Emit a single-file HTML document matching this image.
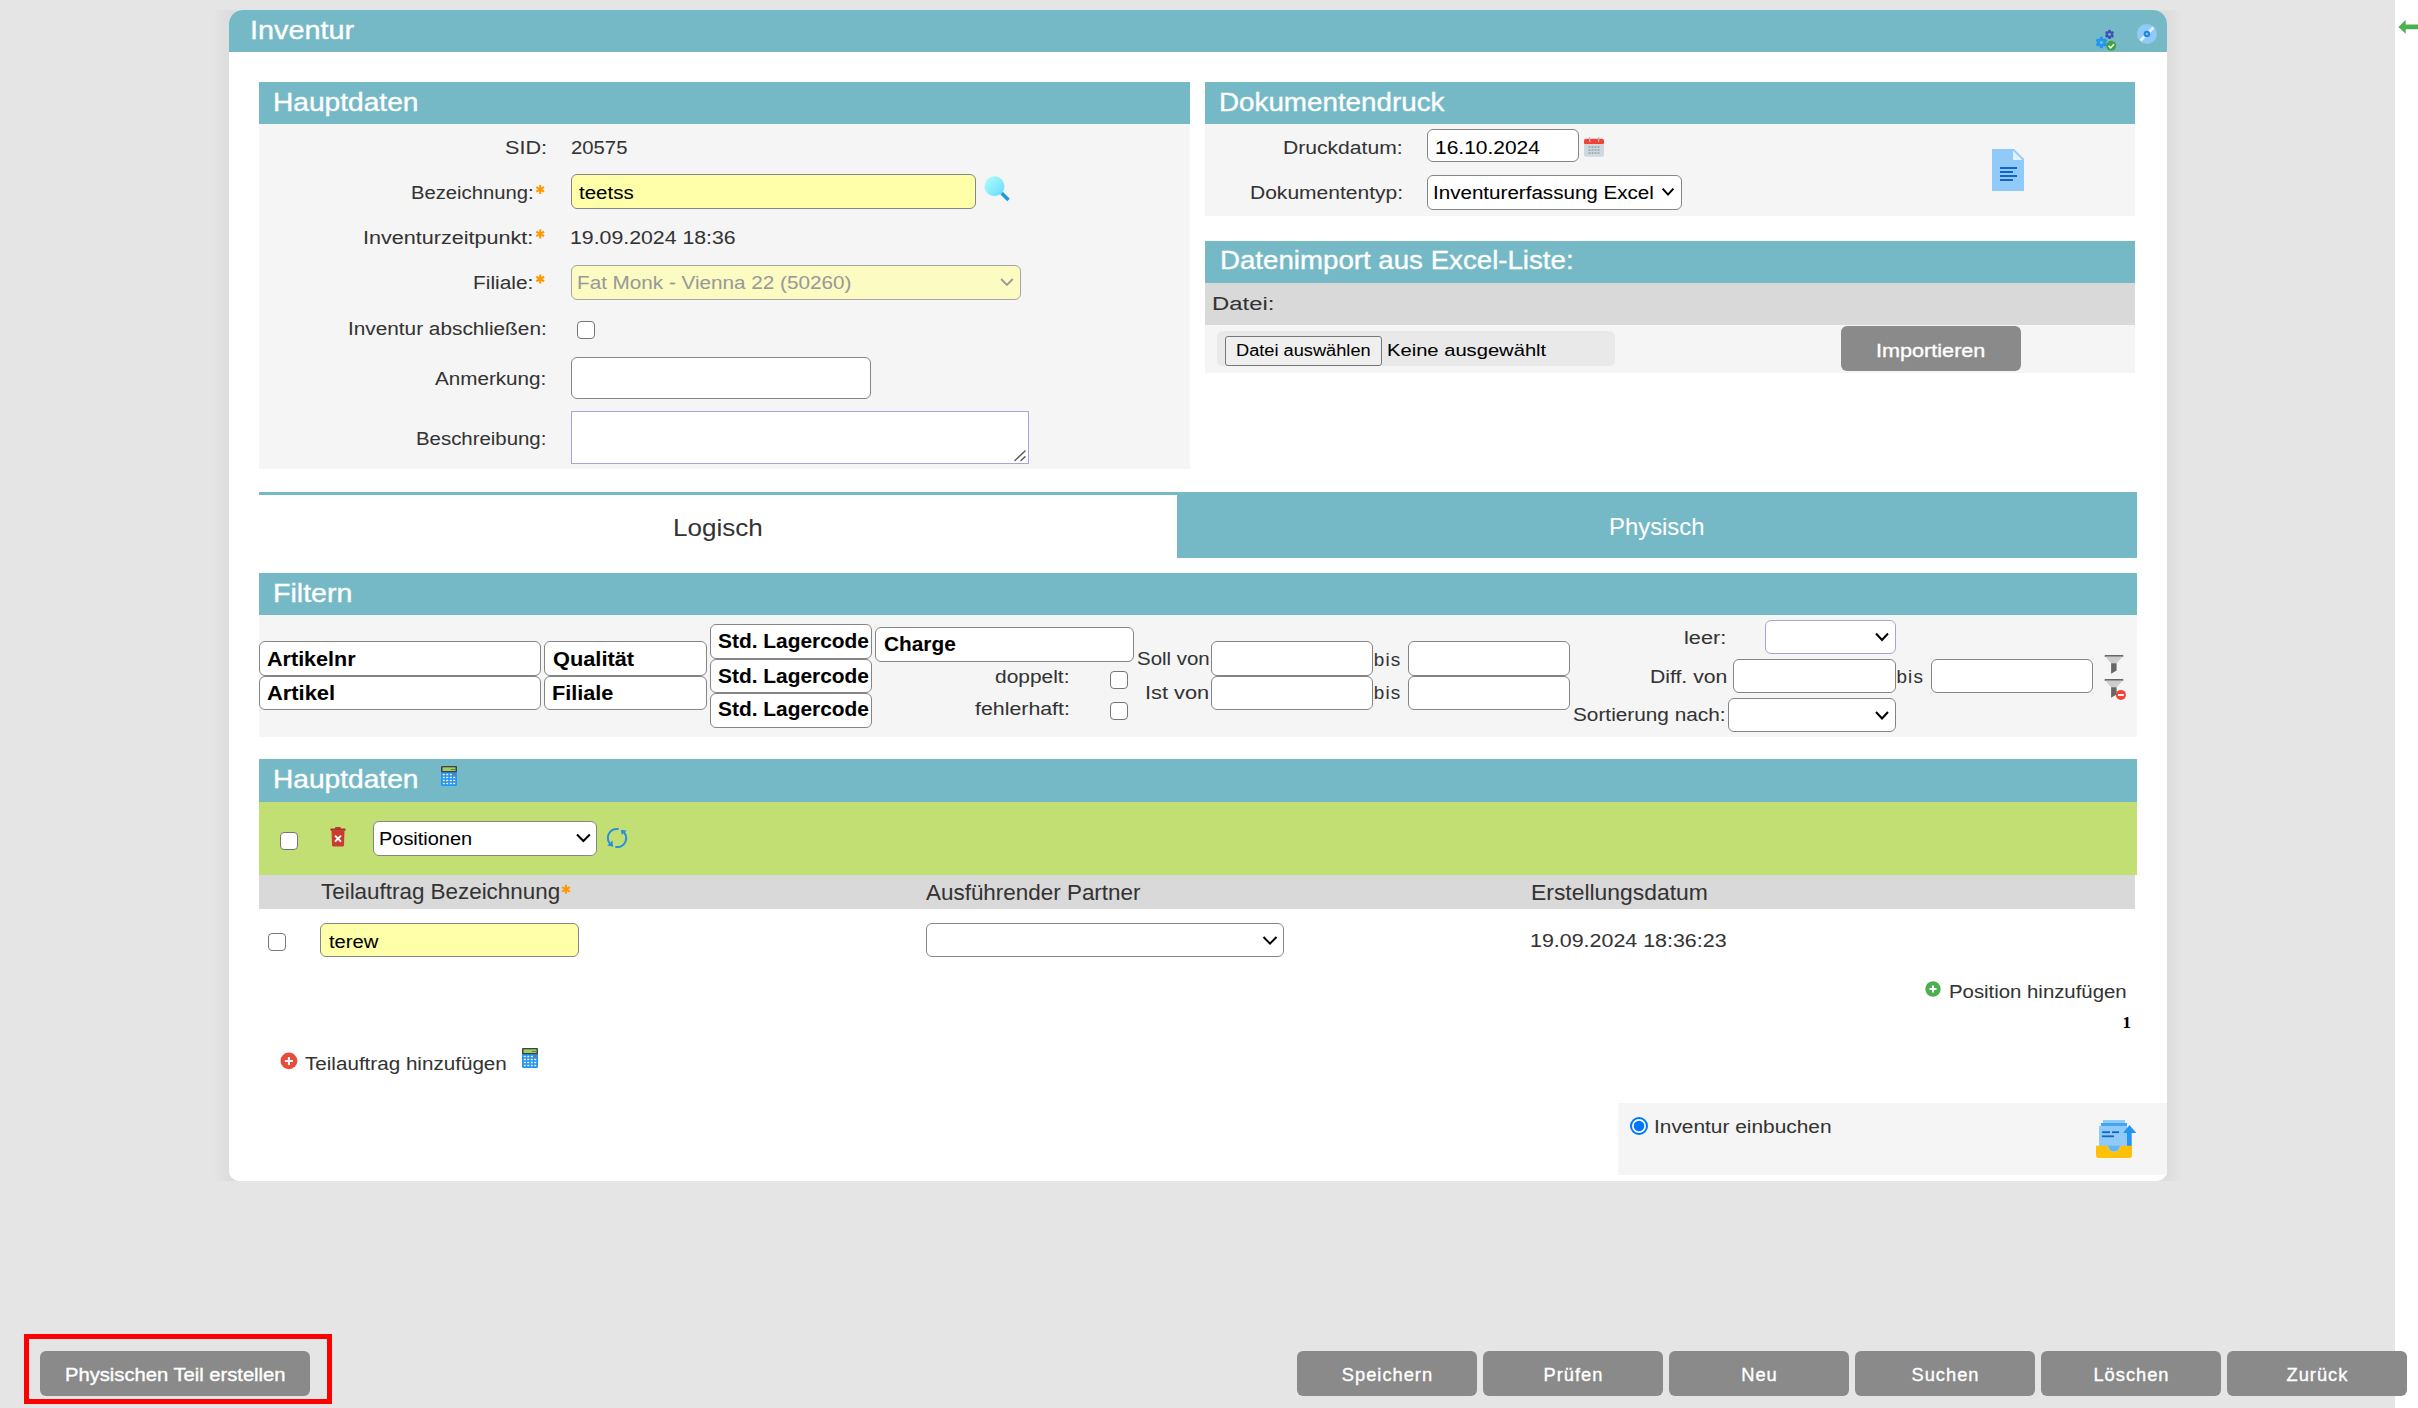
<!DOCTYPE html>
<html><head><meta charset="utf-8"><style>
html,body{margin:0;padding:0;}
body{width:2418px;height:1408px;background:#e5e5e5;position:relative;overflow:hidden;font-family:"Liberation Sans",sans-serif;}
.a{position:absolute;}
.t{position:absolute;white-space:pre;}
svg.i{position:absolute;overflow:visible;}
</style></head><body>
<div class="a" style="left:2395px;top:0px;width:23px;height:1408px;background:#ffffff;"></div>
<div class="a" style="left:213px;top:10px;width:32px;height:1171px;background:linear-gradient(to right, rgba(0,0,0,0) 0px, rgba(0,0,0,0.035) 16px);"></div>
<div class="a" style="left:2151px;top:10px;width:32px;height:1171px;background:linear-gradient(to right, rgba(0,0,0,0.035) 16px, rgba(0,0,0,0) 32px);"></div>
<div class="a" style="left:229px;top:10px;width:1938px;height:1171px;background:#ffffff;border-radius:14px 14px 10px 10px;"></div>
<div class="a" style="left:229px;top:10px;width:1938px;height:42px;background:#76b9c6;border-radius:14px 14px 0 0;"></div>
<div class="t" style="left:249.84px;top:15px;font-size:26.5px;line-height:30px;letter-spacing:0.000px;color:#ffffff;font-weight:400;font-family:'Liberation Sans', sans-serif;-webkit-text-stroke:0.35px #ffffff;transform:scaleX(1.0865);transform-origin:0 0;">Inventur</div>
<div class="a" style="left:259px;top:82px;width:931px;height:42px;background:#76b9c6;"></div>
<div class="a" style="left:259px;top:124px;width:931px;height:345px;background:#f5f5f5;"></div>
<div class="t" style="left:273.29px;top:87px;font-size:26.2px;line-height:30px;letter-spacing:0.000px;color:#ffffff;font-weight:400;font-family:'Liberation Sans', sans-serif;-webkit-text-stroke:0.35px #ffffff;transform:scaleX(1.0742);transform-origin:0 0;">Hauptdaten</div>
<div class="t" style="left:504.62px;top:137px;font-size:18.9px;line-height:21px;letter-spacing:0.000px;color:#333;font-weight:400;font-family:'Liberation Sans', sans-serif;-webkit-text-stroke:0.05px #333;transform:scaleX(1.1442);transform-origin:0 0;">SID:</div>
<div class="t" style="left:570.98px;top:137px;font-size:18.9px;line-height:21px;letter-spacing:0.000px;color:#333;font-weight:400;font-family:'Liberation Sans', sans-serif;-webkit-text-stroke:0.05px #333;transform:scaleX(1.0745);transform-origin:0 0;">20575</div>
<div class="t" style="left:410.94px;top:182px;font-size:18.9px;line-height:21px;letter-spacing:0.000px;color:#333;font-weight:400;font-family:'Liberation Sans', sans-serif;-webkit-text-stroke:0.05px #333;transform:scaleX(1.0704);transform-origin:0 0;">Bezeichnung:</div>
<svg class="i" style="left:0;top:0" width="2418" height="1408"><path d="M540.20,184.90 L540.20,193.90 M536.30,187.15 L544.10,191.65 M544.10,187.15 L536.30,191.65 " stroke="#ff9800" stroke-width="2.1"/></svg>
<div class="a" style="left:571px;top:174px;width:405px;height:35px;background:#ffffaa;border:1px solid #858585;box-sizing:border-box;border-radius:6px;"></div>
<div class="t" style="left:579.09px;top:182px;font-size:18.9px;line-height:21px;letter-spacing:0.000px;color:#000;font-weight:400;font-family:'Liberation Sans', sans-serif;-webkit-text-stroke:0.05px #000;transform:scaleX(1.0838);transform-origin:0 0;">teetss</div>
<div class="t" style="left:363.41px;top:226.5px;font-size:18.9px;line-height:21px;letter-spacing:0.000px;color:#333;font-weight:400;font-family:'Liberation Sans', sans-serif;-webkit-text-stroke:0.05px #333;transform:scaleX(1.1412);transform-origin:0 0;">Inventurzeitpunkt:</div>
<svg class="i" style="left:0;top:0" width="2418" height="1408"><path d="M540.20,229.40 L540.20,238.40 M536.30,231.65 L544.10,236.15 M544.10,231.65 L536.30,236.15 " stroke="#ff9800" stroke-width="2.1"/></svg>
<div class="t" style="left:570.38px;top:226.5px;font-size:18.9px;line-height:21px;letter-spacing:0.000px;color:#333;font-weight:400;font-family:'Liberation Sans', sans-serif;-webkit-text-stroke:0.05px #333;transform:scaleX(1.1265);transform-origin:0 0;">19.09.2024 18:36</div>
<div class="t" style="left:473.49px;top:271.6px;font-size:18.9px;line-height:21px;letter-spacing:0.000px;color:#333;font-weight:400;font-family:'Liberation Sans', sans-serif;-webkit-text-stroke:0.05px #333;transform:scaleX(1.1044);transform-origin:0 0;">Filiale:</div>
<svg class="i" style="left:0;top:0" width="2418" height="1408"><path d="M540.20,274.50 L540.20,283.50 M536.30,276.75 L544.10,281.25 M544.10,276.75 L536.30,281.25 " stroke="#ff9800" stroke-width="2.1"/></svg>
<div class="a" style="left:571px;top:265px;width:450px;height:35px;background:#fcfbc1;border:1px solid #a5a5a5;box-sizing:border-box;border-radius:6px;"></div>
<div class="t" style="left:576.70px;top:271.6px;font-size:18.9px;line-height:21px;letter-spacing:0.000px;color:#999;font-weight:400;font-family:'Liberation Sans', sans-serif;-webkit-text-stroke:0.05px #999;transform:scaleX(1.0946);transform-origin:0 0;">Fat Monk - Vienna 22 (50260)</div>
<div class="t" style="left:347.78px;top:318px;font-size:18.9px;line-height:21px;letter-spacing:0.000px;color:#333;font-weight:400;font-family:'Liberation Sans', sans-serif;-webkit-text-stroke:0.05px #333;transform:scaleX(1.1002);transform-origin:0 0;">Inventur abschließen:</div>
<div class="a" style="left:577px;top:321px;width:18px;height:18px;background:#fff;border:1.8px solid #767676;box-sizing:border-box;border-radius:4px;"></div>
<div class="t" style="left:435.26px;top:367.7px;font-size:18.9px;line-height:21px;letter-spacing:0.000px;color:#333;font-weight:400;font-family:'Liberation Sans', sans-serif;-webkit-text-stroke:0.05px #333;transform:scaleX(1.0924);transform-origin:0 0;">Anmerkung:</div>
<div class="a" style="left:571px;top:357px;width:300px;height:42px;background:#fff;border:1px solid #858585;box-sizing:border-box;border-radius:6px;"></div>
<div class="t" style="left:416.13px;top:427.8px;font-size:18.9px;line-height:21px;letter-spacing:0.000px;color:#333;font-weight:400;font-family:'Liberation Sans', sans-serif;-webkit-text-stroke:0.05px #333;transform:scaleX(1.0795);transform-origin:0 0;">Beschreibung:</div>
<div class="a" style="left:571px;top:411px;width:458px;height:53px;background:#fff;border:1px solid #a6a6d6;box-sizing:border-box;"></div>
<div class="a" style="left:1205px;top:82px;width:930px;height:42px;background:#76b9c6;"></div>
<div class="a" style="left:1205px;top:124px;width:930px;height:92px;background:#f5f5f5;"></div>
<div class="t" style="left:1219.02px;top:87px;font-size:26.2px;line-height:30px;letter-spacing:0.000px;color:#fff;font-weight:400;font-family:'Liberation Sans', sans-serif;-webkit-text-stroke:0.35px #fff;transform:scaleX(1.0607);transform-origin:0 0;">Dokumentendruck</div>
<div class="t" style="left:1283.27px;top:136.7px;font-size:18.9px;line-height:21px;letter-spacing:0.000px;color:#333;font-weight:400;font-family:'Liberation Sans', sans-serif;-webkit-text-stroke:0.05px #333;transform:scaleX(1.1169);transform-origin:0 0;">Druckdatum:</div>
<div class="a" style="left:1427px;top:129px;width:152px;height:33px;background:#fff;border:1px solid #858585;box-sizing:border-box;border-radius:6px;"></div>
<div class="t" style="left:1435.20px;top:136.5px;font-size:18.9px;line-height:21px;letter-spacing:0.000px;color:#000;font-weight:400;font-family:'Liberation Sans', sans-serif;-webkit-text-stroke:0.05px #000;transform:scaleX(1.1091);transform-origin:0 0;">16.10.2024</div>
<div class="t" style="left:1249.77px;top:182px;font-size:18.9px;line-height:21px;letter-spacing:0.000px;color:#333;font-weight:400;font-family:'Liberation Sans', sans-serif;-webkit-text-stroke:0.05px #333;transform:scaleX(1.1128);transform-origin:0 0;">Dokumententyp:</div>
<div class="a" style="left:1427px;top:175px;width:255px;height:35px;background:#fff;border:1px solid #858585;box-sizing:border-box;border-radius:6px;"></div>
<div class="t" style="left:1432.70px;top:182px;font-size:18.9px;line-height:21px;letter-spacing:0.000px;color:#000;font-weight:400;font-family:'Liberation Sans', sans-serif;-webkit-text-stroke:0.05px #000;transform:scaleX(1.0898);transform-origin:0 0;">Inventurerfassung Excel</div>
<div class="a" style="left:1205px;top:241px;width:930px;height:42px;background:#76b9c6;"></div>
<div class="a" style="left:1205px;top:283px;width:930px;height:42px;background:#d9d9d9;"></div>
<div class="a" style="left:1205px;top:325px;width:930px;height:48px;background:#f5f5f5;"></div>
<div class="t" style="left:1219.73px;top:245px;font-size:26px;line-height:30px;letter-spacing:0.000px;color:#fff;font-weight:400;font-family:'Liberation Sans', sans-serif;-webkit-text-stroke:0.35px #fff;transform:scaleX(1.0639);transform-origin:0 0;">Datenimport aus Excel-Liste:</div>
<div class="t" style="left:1212.04px;top:293px;font-size:18.9px;line-height:21px;letter-spacing:0.000px;color:#333;font-weight:400;font-family:'Liberation Sans', sans-serif;-webkit-text-stroke:0.05px #333;transform:scaleX(1.2647);transform-origin:0 0;">Datei:</div>
<div class="a" style="left:1217px;top:331px;width:398px;height:35px;background:#e9e9e9;border-radius:6px;"></div>
<div class="a" style="left:1225px;top:336px;width:157px;height:30px;background:#efefef;border:1px solid #767676;box-sizing:border-box;border-radius:3px;"></div>
<div class="t" style="left:1235.70px;top:339.6px;font-size:17.3px;line-height:20px;letter-spacing:0.000px;color:#000;font-weight:400;font-family:'Liberation Sans', sans-serif;-webkit-text-stroke:0.05px #000;transform:scaleX(1.0537);transform-origin:0 0;">Datei auswählen</div>
<div class="t" style="left:1387.15px;top:340.6px;font-size:17px;line-height:19px;letter-spacing:0.000px;color:#000;font-weight:400;font-family:'Liberation Sans', sans-serif;-webkit-text-stroke:0.05px #000;transform:scaleX(1.1862);transform-origin:0 0;">Keine ausgewählt</div>
<div class="a" style="left:1841px;top:326px;width:180px;height:45px;background:#8a8a8a;border-radius:6px;"></div>
<div class="t" style="left:1875.90px;top:340px;font-size:18.3px;line-height:21px;letter-spacing:0.000px;color:#fff;font-weight:400;font-family:'Liberation Sans', sans-serif;-webkit-text-stroke:0.35px #fff;transform:scaleX(1.1831);transform-origin:0 0;">Importieren</div>
<div class="a" style="left:259px;top:492px;width:1878px;height:3px;background:#76b9c6;"></div>
<div class="a" style="left:1177px;top:492px;width:960px;height:66px;background:#76b9c6;"></div>
<div class="t" style="left:672.96px;top:513.7px;font-size:24.5px;line-height:27px;letter-spacing:0.000px;color:#333;font-weight:400;font-family:'Liberation Sans', sans-serif;-webkit-text-stroke:0.05px #333;transform:scaleX(1.0625);transform-origin:0 0;">Logisch</div>
<div class="t" style="left:1609.24px;top:513px;font-size:24.5px;line-height:27px;letter-spacing:0.000px;color:#fff;font-weight:400;font-family:'Liberation Sans', sans-serif;-webkit-text-stroke:0.05px #fff;transform:scaleX(0.9742);transform-origin:0 0;">Physisch</div>
<div class="a" style="left:259px;top:573px;width:1878px;height:42px;background:#76b9c6;"></div>
<div class="a" style="left:259px;top:615px;width:1878px;height:122px;background:#f5f5f5;"></div>
<div class="t" style="left:273.26px;top:578px;font-size:26.2px;line-height:30px;letter-spacing:0.000px;color:#fff;font-weight:400;font-family:'Liberation Sans', sans-serif;-webkit-text-stroke:0.35px #fff;transform:scaleX(1.0907);transform-origin:0 0;">Filtern</div>
<div class="a" style="left:259px;top:641px;width:282px;height:35px;background:#fff;border:1px solid #858585;box-sizing:border-box;border-radius:6px;"></div>
<div class="t" style="left:267.46px;top:647.8px;font-size:19.6px;line-height:22px;letter-spacing:0.000px;color:#000;font-weight:700;font-family:'Liberation Sans', sans-serif;-webkit-text-stroke:0.05px #000;transform:scaleX(1.1000);transform-origin:0 0;">Artikelnr</div>
<div class="a" style="left:259px;top:676px;width:282px;height:34px;background:#fff;border:1px solid #858585;box-sizing:border-box;border-radius:6px;"></div>
<div class="t" style="left:267.46px;top:681.7px;font-size:19.6px;line-height:22px;letter-spacing:0.000px;color:#000;font-weight:700;font-family:'Liberation Sans', sans-serif;-webkit-text-stroke:0.05px #000;transform:scaleX(1.1163);transform-origin:0 0;">Artikel</div>
<div class="a" style="left:544px;top:641px;width:163px;height:35px;background:#fff;border:1px solid #858585;box-sizing:border-box;border-radius:6px;"></div>
<div class="t" style="left:552.71px;top:647.6px;font-size:19.6px;line-height:22px;letter-spacing:0.000px;color:#000;font-weight:700;font-family:'Liberation Sans', sans-serif;-webkit-text-stroke:0.05px #000;transform:scaleX(1.1109);transform-origin:0 0;">Qualität</div>
<div class="a" style="left:544px;top:676px;width:163px;height:34px;background:#fff;border:1px solid #858585;box-sizing:border-box;border-radius:6px;"></div>
<div class="t" style="left:552.15px;top:681.7px;font-size:19.6px;line-height:22px;letter-spacing:0.000px;color:#000;font-weight:700;font-family:'Liberation Sans', sans-serif;-webkit-text-stroke:0.05px #000;transform:scaleX(1.1050);transform-origin:0 0;">Filiale</div>
<div class="a" style="left:710px;top:624px;width:162px;height:35px;background:#fff;border:1px solid #858585;box-sizing:border-box;border-radius:6px;"></div>
<div class="t" style="left:718.00px;top:630px;font-size:19.6px;line-height:22px;letter-spacing:0.000px;color:#000;font-weight:700;font-family:'Liberation Sans', sans-serif;-webkit-text-stroke:0.05px #000;transform:scaleX(1.0666);transform-origin:0 0;">Std. Lagercode</div>
<div class="a" style="left:710px;top:659px;width:162px;height:34px;background:#fff;border:1px solid #858585;box-sizing:border-box;border-radius:6px;"></div>
<div class="t" style="left:718.00px;top:664.5px;font-size:19.6px;line-height:22px;letter-spacing:0.000px;color:#000;font-weight:700;font-family:'Liberation Sans', sans-serif;-webkit-text-stroke:0.05px #000;transform:scaleX(1.0666);transform-origin:0 0;">Std. Lagercode</div>
<div class="a" style="left:710px;top:693px;width:162px;height:35px;background:#fff;border:1px solid #858585;box-sizing:border-box;border-radius:6px;"></div>
<div class="t" style="left:718.00px;top:698.2px;font-size:19.6px;line-height:22px;letter-spacing:0.000px;color:#000;font-weight:700;font-family:'Liberation Sans', sans-serif;-webkit-text-stroke:0.05px #000;transform:scaleX(1.0666);transform-origin:0 0;">Std. Lagercode</div>
<div class="a" style="left:875px;top:627px;width:259px;height:35px;background:#fff;border:1px solid #858585;box-sizing:border-box;border-radius:6px;"></div>
<div class="t" style="left:883.65px;top:632.5px;font-size:19.6px;line-height:22px;letter-spacing:0.000px;color:#000;font-weight:700;font-family:'Liberation Sans', sans-serif;-webkit-text-stroke:0.05px #000;transform:scaleX(1.0627);transform-origin:0 0;">Charge</div>
<div class="t" style="left:995.02px;top:666px;font-size:18.9px;line-height:21px;letter-spacing:0.000px;color:#333;font-weight:400;font-family:'Liberation Sans', sans-serif;-webkit-text-stroke:0.05px #333;transform:scaleX(1.1075);transform-origin:0 0;">doppelt:</div>
<div class="a" style="left:1110px;top:671px;width:18px;height:18px;background:#fff;border:1.8px solid #767676;box-sizing:border-box;border-radius:4px;"></div>
<div class="t" style="left:974.60px;top:698px;font-size:18.9px;line-height:21px;letter-spacing:0.000px;color:#333;font-weight:400;font-family:'Liberation Sans', sans-serif;-webkit-text-stroke:0.05px #333;transform:scaleX(1.1296);transform-origin:0 0;">fehlerhaft:</div>
<div class="a" style="left:1110px;top:702px;width:18px;height:18px;background:#fff;border:1.8px solid #767676;box-sizing:border-box;border-radius:4px;"></div>
<div class="t" style="left:1136.57px;top:648.4px;font-size:18.9px;line-height:21px;letter-spacing:0.000px;color:#333;font-weight:400;font-family:'Liberation Sans', sans-serif;-webkit-text-stroke:0.05px #333;transform:scaleX(1.0820);transform-origin:0 0;">Soll von</div>
<div class="t" style="left:1145.19px;top:682px;font-size:18.9px;line-height:21px;letter-spacing:0.000px;color:#333;font-weight:400;font-family:'Liberation Sans', sans-serif;-webkit-text-stroke:0.05px #333;transform:scaleX(1.1536);transform-origin:0 0;">Ist von</div>
<div class="a" style="left:1211px;top:641px;width:162px;height:35px;background:#fff;border:1px solid #858585;box-sizing:border-box;border-radius:6px;"></div>
<div class="a" style="left:1211px;top:676px;width:162px;height:34px;background:#fff;border:1px solid #858585;box-sizing:border-box;border-radius:6px;"></div>
<div class="t" style="left:1373.78px;top:648.8px;font-size:18.9px;line-height:21px;letter-spacing:1.200px;color:#333;font-weight:400;font-family:'Liberation Sans', sans-serif;-webkit-text-stroke:0.05px #333;">bis</div>
<div class="t" style="left:1373.78px;top:682px;font-size:18.9px;line-height:21px;letter-spacing:1.200px;color:#333;font-weight:400;font-family:'Liberation Sans', sans-serif;-webkit-text-stroke:0.05px #333;">bis</div>
<div class="a" style="left:1408px;top:641px;width:162px;height:35px;background:#fff;border:1px solid #858585;box-sizing:border-box;border-radius:6px;"></div>
<div class="a" style="left:1408px;top:676px;width:162px;height:34px;background:#fff;border:1px solid #858585;box-sizing:border-box;border-radius:6px;"></div>
<div class="t" style="left:1683.54px;top:627px;font-size:18.9px;line-height:21px;letter-spacing:0.000px;color:#333;font-weight:400;font-family:'Liberation Sans', sans-serif;-webkit-text-stroke:0.05px #333;transform:scaleX(1.1490);transform-origin:0 0;">leer:</div>
<div class="a" style="left:1765px;top:620px;width:131px;height:34px;background:#fff;border:1px solid #a5a5d5;box-sizing:border-box;border-radius:6px;"></div>
<div class="t" style="left:1649.66px;top:666px;font-size:18.9px;line-height:21px;letter-spacing:0.000px;color:#333;font-weight:400;font-family:'Liberation Sans', sans-serif;-webkit-text-stroke:0.05px #333;transform:scaleX(1.1207);transform-origin:0 0;">Diff. von</div>
<div class="a" style="left:1733px;top:659px;width:163px;height:34px;background:#fff;border:1px solid #858585;box-sizing:border-box;border-radius:6px;"></div>
<div class="t" style="left:1896.38px;top:666px;font-size:18.9px;line-height:21px;letter-spacing:1.200px;color:#333;font-weight:400;font-family:'Liberation Sans', sans-serif;-webkit-text-stroke:0.05px #333;">bis</div>
<div class="a" style="left:1931px;top:659px;width:162px;height:34px;background:#fff;border:1px solid #858585;box-sizing:border-box;border-radius:6px;"></div>
<div class="t" style="left:1573.06px;top:704.4px;font-size:18.9px;line-height:21px;letter-spacing:0.000px;color:#333;font-weight:400;font-family:'Liberation Sans', sans-serif;-webkit-text-stroke:0.05px #333;transform:scaleX(1.1006);transform-origin:0 0;">Sortierung nach:</div>
<div class="a" style="left:1728px;top:698px;width:168px;height:34px;background:#fff;border:1px solid #858585;box-sizing:border-box;border-radius:6px;"></div>
<div class="a" style="left:259px;top:759px;width:1878px;height:43px;background:#76b9c6;"></div>
<div class="t" style="left:273.39px;top:764px;font-size:26.2px;line-height:30px;letter-spacing:0.000px;color:#fff;font-weight:400;font-family:'Liberation Sans', sans-serif;-webkit-text-stroke:0.35px #fff;transform:scaleX(1.0742);transform-origin:0 0;">Hauptdaten</div>
<div class="a" style="left:259px;top:802px;width:1878px;height:73px;background:#c2df74;"></div>
<div class="a" style="left:259px;top:875px;width:1876px;height:34px;background:#d9d9d9;"></div>
<div class="a" style="left:280px;top:832px;width:18px;height:18px;background:#fff;border:1.8px solid #767676;box-sizing:border-box;border-radius:4px;"></div>
<div class="a" style="left:373px;top:821px;width:224px;height:35px;background:#fff;border:1px solid #858585;box-sizing:border-box;border-radius:6px;"></div>
<div class="t" style="left:379.06px;top:827.7px;font-size:18.9px;line-height:21px;letter-spacing:0.000px;color:#000;font-weight:400;font-family:'Liberation Sans', sans-serif;-webkit-text-stroke:0.05px #000;transform:scaleX(1.0551);transform-origin:0 0;">Positionen</div>
<div class="t" style="left:320.70px;top:879px;font-size:21.7px;line-height:25px;letter-spacing:0.000px;color:#333;font-weight:400;font-family:'Liberation Sans', sans-serif;-webkit-text-stroke:0.05px #333;transform:scaleX(1.0329);transform-origin:0 0;">Teilauftrag Bezeichnung</div>
<svg class="i" style="left:0;top:0" width="2418" height="1408"><path d="M566.00,884.80 L566.00,893.80 M562.10,887.05 L569.90,891.55 M569.90,887.05 L562.10,891.55 " stroke="#ff9800" stroke-width="2.1"/></svg>
<div class="t" style="left:926.46px;top:880px;font-size:21.7px;line-height:25px;letter-spacing:0.000px;color:#333;font-weight:400;font-family:'Liberation Sans', sans-serif;-webkit-text-stroke:0.05px #333;transform:scaleX(1.0344);transform-origin:0 0;">Ausführender Partner</div>
<div class="t" style="left:1530.52px;top:880px;font-size:21.7px;line-height:25px;letter-spacing:0.000px;color:#333;font-weight:400;font-family:'Liberation Sans', sans-serif;-webkit-text-stroke:0.05px #333;transform:scaleX(1.0550);transform-origin:0 0;">Erstellungsdatum</div>
<div class="a" style="left:268px;top:933px;width:18px;height:18px;background:#fff;border:1.8px solid #767676;box-sizing:border-box;border-radius:4px;"></div>
<div class="a" style="left:320px;top:923px;width:259px;height:34px;background:#ffffaa;border:1px solid #858585;box-sizing:border-box;border-radius:6px;"></div>
<div class="t" style="left:329.49px;top:930.7px;font-size:18.9px;line-height:21px;letter-spacing:0.000px;color:#000;font-weight:400;font-family:'Liberation Sans', sans-serif;-webkit-text-stroke:0.05px #000;transform:scaleX(1.0701);transform-origin:0 0;">terew</div>
<div class="a" style="left:926px;top:923px;width:358px;height:34px;background:#fff;border:1px solid #858585;box-sizing:border-box;border-radius:6px;"></div>
<div class="t" style="left:1530.37px;top:930.4px;font-size:18.9px;line-height:21px;letter-spacing:0.000px;color:#333;font-weight:400;font-family:'Liberation Sans', sans-serif;-webkit-text-stroke:0.05px #333;transform:scaleX(1.1341);transform-origin:0 0;">19.09.2024 18:36:23</div>
<div class="t" style="left:1949.03px;top:981px;font-size:18.9px;line-height:21px;letter-spacing:0.000px;color:#333;font-weight:400;font-family:'Liberation Sans', sans-serif;-webkit-text-stroke:0.05px #333;transform:scaleX(1.0771);transform-origin:0 0;">Position hinzufügen</div>
<div class="t" style="left:2122.38px;top:1012.7px;font-size:17px;line-height:19px;letter-spacing:0.000px;color:#000;font-weight:700;font-family:'Liberation Serif', serif;-webkit-text-stroke:0.05px #000;">1</div>
<div class="t" style="left:305.04px;top:1052.6px;font-size:18.9px;line-height:21px;letter-spacing:0.000px;color:#333;font-weight:400;font-family:'Liberation Sans', sans-serif;-webkit-text-stroke:0.05px #333;transform:scaleX(1.0918);transform-origin:0 0;">Teilauftrag hinzufügen</div>
<div class="a" style="left:1618px;top:1103px;width:549px;height:72px;background:#f5f5f5;"></div>
<div class="t" style="left:1654.17px;top:1116px;font-size:18.9px;line-height:21px;letter-spacing:0.000px;color:#333;font-weight:400;font-family:'Liberation Sans', sans-serif;-webkit-text-stroke:0.05px #333;transform:scaleX(1.1045);transform-origin:0 0;">Inventur einbuchen</div>
<div class="a" style="left:1297px;top:1351px;width:180px;height:45px;background:#8a8a8a;border-radius:6px;"></div>
<div class="t" style="left:1341.80px;top:1364px;font-size:18.3px;line-height:21px;letter-spacing:1.000px;color:#fff;font-weight:400;font-family:'Liberation Sans', sans-serif;-webkit-text-stroke:0.35px #fff;">Speichern</div>
<div class="a" style="left:1483px;top:1351px;width:180px;height:45px;background:#8a8a8a;border-radius:6px;"></div>
<div class="t" style="left:1543.54px;top:1364px;font-size:18.3px;line-height:21px;letter-spacing:1.000px;color:#fff;font-weight:400;font-family:'Liberation Sans', sans-serif;-webkit-text-stroke:0.35px #fff;">Prüfen</div>
<div class="a" style="left:1669px;top:1351px;width:180px;height:45px;background:#8a8a8a;border-radius:6px;"></div>
<div class="t" style="left:1741.21px;top:1364px;font-size:18.3px;line-height:21px;letter-spacing:1.000px;color:#fff;font-weight:400;font-family:'Liberation Sans', sans-serif;-webkit-text-stroke:0.35px #fff;">Neu</div>
<div class="a" style="left:1855px;top:1351px;width:180px;height:45px;background:#8a8a8a;border-radius:6px;"></div>
<div class="t" style="left:1911.47px;top:1364px;font-size:18.3px;line-height:21px;letter-spacing:1.000px;color:#fff;font-weight:400;font-family:'Liberation Sans', sans-serif;-webkit-text-stroke:0.35px #fff;">Suchen</div>
<div class="a" style="left:2041px;top:1351px;width:180px;height:45px;background:#8a8a8a;border-radius:6px;"></div>
<div class="t" style="left:2093.41px;top:1364px;font-size:18.3px;line-height:21px;letter-spacing:1.000px;color:#fff;font-weight:400;font-family:'Liberation Sans', sans-serif;-webkit-text-stroke:0.35px #fff;">Löschen</div>
<div class="a" style="left:2227px;top:1351px;width:180px;height:45px;background:#8a8a8a;border-radius:6px;"></div>
<div class="t" style="left:2286.54px;top:1364px;font-size:18.3px;line-height:21px;letter-spacing:1.000px;color:#fff;font-weight:400;font-family:'Liberation Sans', sans-serif;-webkit-text-stroke:0.35px #fff;">Zurück</div>
<div class="a" style="left:40px;top:1351px;width:270px;height:45px;background:#8a8a8a;border-radius:6px;"></div>
<div class="t" style="left:64.54px;top:1364.4px;font-size:18.3px;line-height:21px;letter-spacing:0.000px;color:#fff;font-weight:400;font-family:'Liberation Sans', sans-serif;-webkit-text-stroke:0.35px #fff;transform:scaleX(1.1035);transform-origin:0 0;">Physischen Teil erstellen</div>
<div class="a" style="left:24px;top:1334px;width:308px;height:70px;border:5px solid #ff0000;box-sizing:border-box;"></div>
<svg class="i" style="left:0;top:0;" width="2418" height="1408" viewBox="0 0 2418 1408">
<defs>
<linearGradient id="mg" x1="0" y1="0" x2="1" y2="1"><stop offset="0" stop-color="#b2fff8"/><stop offset="1" stop-color="#66d9ff"/></linearGradient>
</defs>
<!-- header gears -->
<g transform="translate(2101.4,42.5)">
 <g fill="#2196f3">
  <circle r="4.2"/>
  <rect x="-1.6" y="-5.8" width="3.2" height="11.6" rx="0.8"/>
  <rect x="-1.6" y="-5.8" width="3.2" height="11.6" rx="0.8" transform="rotate(60)"/>
  <rect x="-1.6" y="-5.8" width="3.2" height="11.6" rx="0.8" transform="rotate(120)"/>
 </g>
 <circle r="1.7" fill="#76b9c6"/>
</g>
<g transform="translate(2109.5,34.4)">
 <g fill="#3f51b5">
  <circle r="3.4"/>
  <rect x="-1.3" y="-4.6" width="2.6" height="9.2" rx="0.6"/>
  <rect x="-1.3" y="-4.6" width="2.6" height="9.2" rx="0.6" transform="rotate(60)"/>
  <rect x="-1.3" y="-4.6" width="2.6" height="9.2" rx="0.6" transform="rotate(120)"/>
 </g>
 <circle r="1.4" fill="#76b9c6"/>
</g>
<circle cx="2111.2" cy="45.8" r="5" fill="#43a047"/>
<path d="M2108.6,45.9 L2110.6,47.8 L2114,44.2" stroke="#e8f5e9" stroke-width="1.6" fill="none"/>
<!-- disc -->
<circle cx="2146.9" cy="33.9" r="10" fill="#90caf9"/>
<path d="M2140.5,40.5 L2153.5,27.5" stroke="#e3f2fd" stroke-width="3"/>
<circle cx="2146.9" cy="33.9" r="3.2" fill="#1e88e5"/>
<circle cx="2146.9" cy="33.9" r="1.1" fill="#90caf9"/>
<!-- search -->
<path d="M1001.5,193 L1008.5,200" stroke="#1a9ae0" stroke-width="3.6"/>
<circle cx="994.5" cy="186.3" r="10" fill="url(#mg)"/>
<!-- filiale chevron -->
<path d="M1001.1,279 L1006.9,285 L1012.8,279" stroke="#999" stroke-width="1.8" fill="none"/>
<!-- textarea handle -->
<path d="M1015,460.5 L1025,451 M1021,460.5 L1025,456.7" stroke="#555" stroke-width="1.4" stroke-linecap="round"/>
<!-- calendar -->
<rect x="1584" y="138.8" width="20" height="6" rx="2" fill="#f44336"/>
<rect x="1584" y="144" width="20" height="12.8" rx="2" fill="#cfd8dc"/>
<rect x="1584" y="144" width="20" height="3" fill="#cfd8dc"/>
<g fill="#90a4ae">
<rect x="1588.6" y="146.2" width="1.8" height="1.6"/><rect x="1591.6" y="146.2" width="1.8" height="1.6"/><rect x="1594.6" y="146.2" width="1.8" height="1.6"/><rect x="1597.6" y="146.2" width="1.8" height="1.6"/>
<rect x="1588.6" y="149.2" width="1.8" height="1.6"/><rect x="1591.6" y="149.2" width="1.8" height="1.6"/><rect x="1594.6" y="149.2" width="1.8" height="1.6"/><rect x="1597.6" y="149.2" width="1.8" height="1.6"/>
<rect x="1588.6" y="152.2" width="1.8" height="1.6"/><rect x="1591.6" y="152.2" width="1.8" height="1.6"/><rect x="1594.6" y="152.2" width="1.8" height="1.6"/><rect x="1597.6" y="152.2" width="1.8" height="1.6"/>
</g>
<rect x="1589" y="137" width="1.4" height="5" rx="0.7" fill="#b0bec5"/>
<rect x="1597.9" y="137" width="1.4" height="5" rx="0.7" fill="#b0bec5"/>
<!-- dokumententyp chevron -->
<path d="M1662.6,188.6 L1668,194.6 L1673.4,188.6" stroke="#000" stroke-width="2" fill="none"/>
<!-- doc icon -->
<path d="M1992,149 L2014,149 L2024,159 L2024,191 L1992,191 Z" fill="#90caf9"/>
<path d="M2013,150.5 L2022.5,160 L2013,160 Z" fill="#e3f2fd"/>
<g fill="#1565c0">
<rect x="2000" y="167" width="17" height="2"/>
<rect x="2000" y="171" width="13" height="2"/>
<rect x="2000" y="175" width="17" height="2"/>
<rect x="2000" y="179" width="13" height="2"/>
</g>
<!-- leer / sort chevrons -->
<path d="M1876,633.5 L1882,640 L1888,633.5" stroke="#000" stroke-width="2" fill="none"/>
<path d="M1876,712 L1882,718.5 L1888,712" stroke="#000" stroke-width="2" fill="none"/>
<!-- funnels -->
<g>
 <rect x="2104.5" y="655" width="19" height="1.8" rx="0.9" fill="#666"/>
 <path d="M2105.5,656.8 L2122.5,656.8 L2116.6,663.2 L2111.1,663.2 Z" fill="#ccc"/>
 <path d="M2111.1,663.2 L2116.6,663.2 L2116.6,670.5 L2111.1,673.8 Z" fill="#666"/>
</g>
<g transform="translate(0,24)">
 <rect x="2104.5" y="655" width="19" height="1.8" rx="0.9" fill="#666"/>
 <path d="M2105.5,656.8 L2122.5,656.8 L2116.6,663.2 L2111.1,663.2 Z" fill="#ccc"/>
 <path d="M2111.1,663.2 L2116.6,663.2 L2116.6,670.5 L2111.1,673.8 Z" fill="#666"/>
</g>
<circle cx="2120.9" cy="694.9" r="5" fill="#f44336"/>
<rect x="2118" y="694" width="5.8" height="1.9" fill="#fff"/>
<!-- calc icons -->
<g id="calc">
 <rect x="441" y="766" width="16" height="20" rx="1.5" fill="#2196f3"/>
 <rect x="441" y="766" width="16" height="6.2" rx="1.2" fill="#424242"/>
 <rect x="442.5" y="767.3" width="13" height="3.7" fill="#9ccc65"/>
 <rect x="451" y="769" width="4" height="1" fill="#558b2f"/>
 <g fill="#fff3e0">
  <rect x="442.8" y="773.8" width="2" height="1.4"/><rect x="446.2" y="773.8" width="2" height="1.4"/><rect x="449.8" y="773.8" width="2" height="1.4"/>
  <rect x="442.8" y="776.8" width="2" height="1.4"/><rect x="446.2" y="776.8" width="2" height="1.4"/><rect x="449.8" y="776.8" width="2" height="1.4"/><rect x="453.2" y="776.8" width="2" height="1.4"/>
  <rect x="442.8" y="779.8" width="2" height="1.4"/><rect x="446.2" y="779.8" width="2" height="1.4"/><rect x="449.8" y="779.8" width="2" height="1.4"/><rect x="453.2" y="779.8" width="2" height="1.4"/>
  <rect x="442.8" y="782.8" width="2" height="1.4"/><rect x="446.2" y="782.8" width="2" height="1.4"/><rect x="449.8" y="782.8" width="2" height="1.4"/><rect x="453.2" y="782.8" width="2" height="1.4"/>
 </g>
 <rect x="453.2" y="773.8" width="2" height="1.4" fill="#f44336"/>
</g>
<use href="#calc" transform="translate(81,282)"/>
<!-- trash -->
<rect x="335" y="827" width="6" height="2" rx="1" fill="#c0392b"/>
<rect x="330.4" y="828.5" width="15.2" height="2.2" rx="0.8" fill="#a93226"/>
<path d="M331.5,830.5 L344.5,830.5 L344,845 Q344,846.6 342.4,846.6 L333.6,846.6 Q332,846.6 332,845 Z" fill="#cc3a2e"/>
<path d="M335,835.6 L341,841.6 M341,835.6 L335,841.6" stroke="#fff" stroke-width="2"/>
<!-- positionen chevron -->
<path d="M577,834.5 L583.4,841 L589.8,834.5" stroke="#000" stroke-width="2" fill="none"/>
<!-- refresh -->
<g fill="none" stroke="#2b8fe0" stroke-width="2">
 <path d="M618.6,829.1 A9,9 0 0 0 611.8,845.4"/>
 <path d="M615.4,846.9 A9,9 0 0 0 622.2,830.6"/>
</g>
<path d="M620.9,830 L626.8,830.4 L621.8,834.7 Z" fill="#2b8fe0"/>
<path d="M607.3,845.5 L612.5,840.5 L613.2,846.8 Z" fill="#2b8fe0"/>
<!-- partner chevron -->
<path d="M1263.5,937 L1270,943.6 L1276.5,937" stroke="#000" stroke-width="2" fill="none"/>
<!-- plus circles -->
<circle cx="1933" cy="989" r="7.7" fill="#4caf50"/>
<path d="M1929.5,989 L1936.5,989 M1933,985.5 L1933,992.5" stroke="#fff" stroke-width="2"/>
<circle cx="288.9" cy="1060.9" r="8.4" fill="#e84c3d"/>
<path d="M284.9,1060.9 L292.9,1060.9 M288.9,1056.9 L288.9,1064.9" stroke="#fff" stroke-width="2"/>
<!-- radio -->
<circle cx="1639" cy="1126" r="8" fill="#fff" stroke="#0075ff" stroke-width="2"/>
<circle cx="1639" cy="1126" r="5.3" fill="#0075ff"/>
<!-- einbuchen icon -->
<rect x="2103" y="1120" width="22" height="3.2" fill="#90caf9"/>
<rect x="2101" y="1123" width="26" height="3.2" fill="#42a5f5"/>
<rect x="2099" y="1126" width="28" height="20" fill="#90caf9"/>
<g fill="#1565c0">
<rect x="2102" y="1131.3" width="8" height="1.8"/>
<rect x="2112" y="1131.3" width="7" height="1.8"/>
<rect x="2102" y="1135.4" width="12" height="1.8"/>
</g>
<rect x="2127" y="1132.5" width="4.7" height="14" fill="#2196f3"/>
<path d="M2123,1133 L2129.4,1125 L2136.3,1133 Z" fill="#2196f3"/>
<path d="M2096,1145.8 L2108,1145.8 A6,6 0 0 0 2120,1145.8 L2132,1145.8 L2132,1155 Q2132,1158 2129,1158 L2099,1158 Q2096,1158 2096,1155 Z" fill="#ffc107"/>
<path d="M2108,1145.8 A6,6 0 0 0 2120,1145.8 Z" fill="#64b5f6"/>
<!-- green back arrow -->
<path d="M2398.4,26.9 L2405.7,20 L2405.7,24.6 L2418,24.6 L2418,29.2 L2405.7,29.2 L2405.7,33.8 Z" fill="#4caf50"/>
</svg>

</body></html>
